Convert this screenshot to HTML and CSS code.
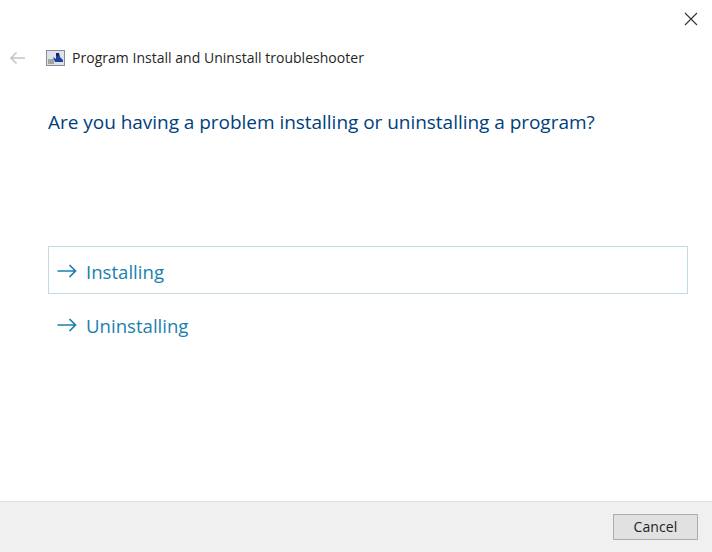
FILE: index.html
```html
<!DOCTYPE html>
<html lang="en">
<head>
<meta charset="utf-8">
<title>Program Install and Uninstall troubleshooter</title>
<link rel="stylesheet" href="styles.css">
</head>
<body>
<div class="window">
  <div class="titlebar">
    <svg class="close" width="14" height="14" viewBox="0 0 14 14"><path d="M1 1L13 13M13 1L1 13" stroke="#333" stroke-width="1.1" fill="none"/></svg>
  </div>
  <div class="navrow">
    <svg class="back" width="18" height="14" viewBox="0 0 18 14"><path d="M16 7H2M7.5 1.5L2 7l5.5 5.5" stroke="#c4c4c4" stroke-width="1.5" fill="none"/></svg>
    <svg class="appicon" width="19" height="16" viewBox="0 0 19 16">
      <rect x=".5" y=".5" width="18" height="15" fill="#dde2ea" stroke="#8a8f96"/>
      <rect x="2" y="9" width="6" height="5" fill="#9fa79e"/>
      <path d="M7 7L10 9V3h3l1 4 3 3v2H9z" fill="#1f3f9e"/>
      <rect x="10" y="3" width="3" height="3" fill="#16245c"/>
    </svg>
    <span class="navtitle">Program Install and Uninstall troubleshooter</span>
  </div>
  <h1 class="heading">Are you having a problem installing or uninstalling a program?</h1>
  <div class="options">
    <a class="option selected"><svg class="arrow" width="20" height="16" viewBox="0 0 20 16"><path d="M0.5 8H18.5M12.5 2l6 6-6 6" stroke="#1a80ae" stroke-width="1.7" fill="none"/></svg><span>Installing</span></a>
    <a class="option"><svg class="arrow" width="20" height="16" viewBox="0 0 20 16"><path d="M0.5 8H18.5M12.5 2l6 6-6 6" stroke="#1a80ae" stroke-width="1.7" fill="none"/></svg><span>Uninstalling</span></a>
  </div>
  <div class="footer"><button class="cancel">Cancel</button></div>
</div>
</body>
</html>
```
FILE: styles.css
```css
html, body { margin: 0; padding: 0; background: #fff; }
.window {
  width: 712px; height: 552px;
  display: flex; flex-direction: column;
  font-family: "Open Sans", "Noto Sans", "Liberation Sans", sans-serif;
  overflow: hidden;
}
.titlebar { height: 38px; display: flex; justify-content: flex-end; align-items: flex-start; padding: 12px 14px 0 0; box-sizing: border-box; }
.close { display: block; }
.navrow { height: 39px; display: flex; align-items: center; padding-left: 9px; }
.back { margin-right: 19px; }
.appicon { margin-right: 7px; }
.navtitle { font-size: 14px; letter-spacing: 0.023px; color: #262626; }
.heading { margin: 32px 0 0 48px; font-size: 19px; letter-spacing: -0.033px; line-height: 26px; font-weight: 400; color: #003f7d; }
.options { margin: 111px 24px 0 48px; display: flex; flex-direction: column; gap: 6px; }
.option { height: 48px; box-sizing: border-box; display: flex; align-items: center; padding: 2px 0 0 8px; border: 1px solid transparent; color: #1a7fae; font-size: 18.6px; }
.option.selected { border-color: #c3d9e4; }
.arrow { margin-right: 9px; }
.footer { margin-top: auto; height: 51px; box-sizing: border-box; background: #f0f0f0; border-top: 1px solid #dfdfdf; display: flex; align-items: center; justify-content: flex-end; padding-right: 14px; }
.cancel { width: 85px; height: 26px; padding: 0 0 2px; background: #e1e1e1; border: 1px solid #adadad; font: inherit; font-size: 14px; letter-spacing: 0.1px; color: #222; }
```
